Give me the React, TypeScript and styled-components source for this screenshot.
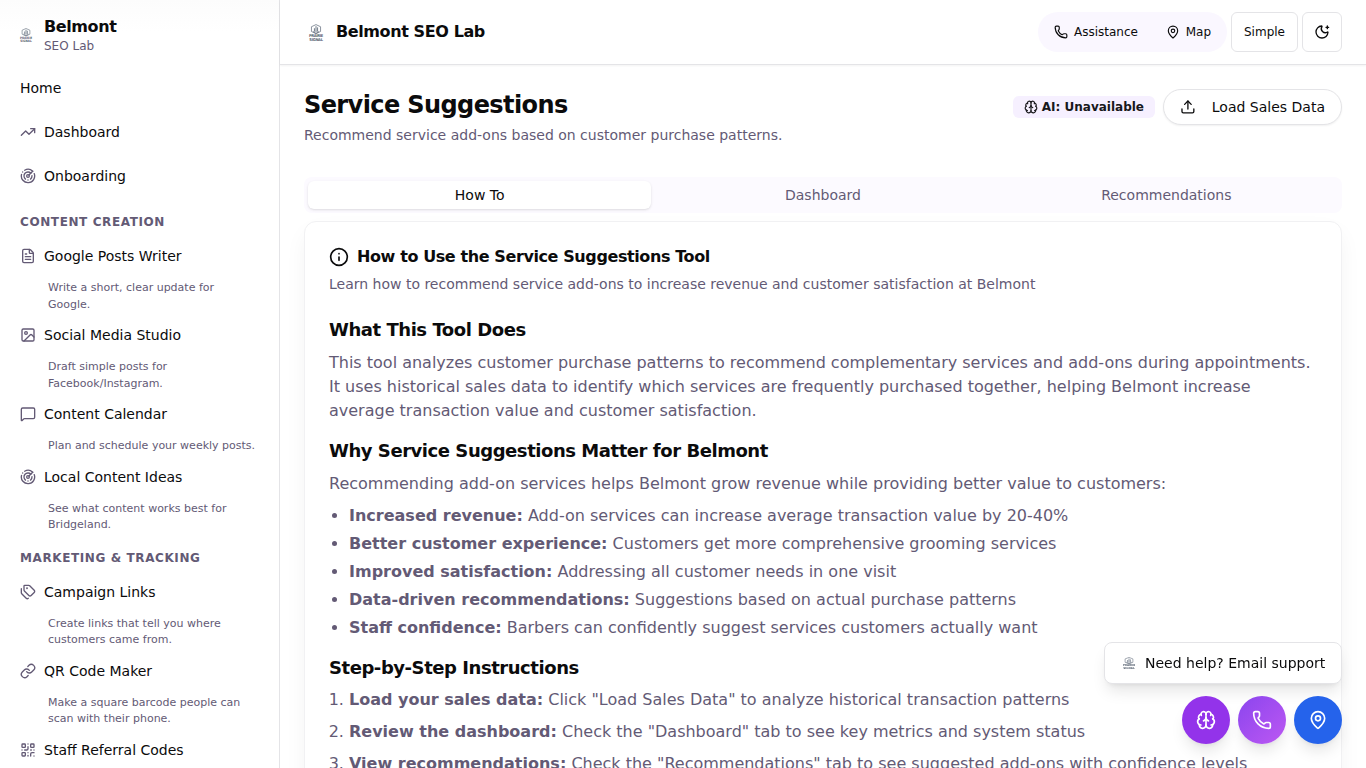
import React from "react";
import styled, { createGlobalStyle } from "styled-components";
import {
  TrendingUp, Radar, FileText, Image as ImageIcon, Tags, Link, QrCode,
  Phone, MapPin, Brain, Upload, Info,
} from "lucide-react";

const GlobalStyle = createGlobalStyle`
  *, *::before, *::after { box-sizing: border-box; }
  body { margin: 0; overflow: hidden; background: #fff; }
  h1, h2, h3, p, ul, ol { margin: 0; padding: 0; }
  button { font: inherit; color: inherit; cursor: pointer; }
`;

const ink = "#0b0b0c";
const muted = "#635a75";
const line = "#e4e4e7";

const Shell = styled.div`
  display: flex;
  height: 768px;
  overflow: hidden;
  font-family: "DejaVu Sans", sans-serif;
  font-size: 14px;
  line-height: 20px;
  color: ${ink};
`;

const Sidebar = styled.aside`
  flex: 0 0 280px;
  height: 768px;
  overflow: hidden;
  padding: 16px 20px;
  border-right: 1px solid ${line};
  background: linear-gradient(#fcfcfc, #fff 32px);
`;

const Brand = styled.div`
  display: flex;
  align-items: center;
  gap: 12px;
  height: 38px;
  margin-bottom: 14px;
`;

const BrandName = styled.div`
  padding-top: 1px;
  font-size: 16px;
  font-weight: 700;
  line-height: 20px;
  letter-spacing: -0.4px;
`;

const BrandSub = styled.div`
  font-size: 12px;
  line-height: 18px;
  color: ${muted};
`;

const NavItem = styled.a<{ $gap?: number }>`
  display: flex;
  align-items: center;
  gap: 8px;
  height: 40px;
  margin-bottom: ${(p) => p.$gap ?? 4}px;
  svg { color: ${muted}; flex: none; }
`;

const NavHint = styled.p`
  margin-bottom: 2px;
  padding-left: 28px;
  width: 237px;
  font-size: 11px;
  line-height: 16.5px;
  color: ${muted};
`;

const NavLabel = styled.h3<{ $top: number }>`
  margin: ${(p) => p.$top}px 0 6px;
  font-size: 12px;
  line-height: 16px;
  font-weight: 700;
  letter-spacing: 0.6px;
  text-transform: uppercase;
  color: ${muted};
`;

const Column = styled.div`
  flex: 1;
  min-width: 0;
  display: flex;
  flex-direction: column;
`;

const TopBar = styled.header`
  flex: none;
  display: flex;
  align-items: center;
  height: 65px;
  padding: 0 24px;
  border-bottom: 1px solid ${line};
  box-shadow: 0 1px 2px rgba(0, 0, 0, 0.05);
`;

const TopBrand = styled.div`
  display: flex;
  align-items: center;
  gap: 8px;
  flex: 1;
  font-size: 16px;
  font-weight: 700;
  letter-spacing: -0.4px;
  svg { margin: 0 5px; }
`;

const Pill = styled.div`
  display: flex;
  align-items: center;
  justify-content: space-between;
  width: 189px;
  height: 40px;
  padding: 0 16px;
  margin-right: 4px;
  border-radius: 20px;
  background: #faf7ff;
  font-size: 12px;
  line-height: 16px;
`;

const PillLink = styled.a`
  display: flex;
  align-items: center;
  gap: 6px;
`;

const SquareButton = styled.button<{ $width: number }>`
  display: flex;
  align-items: center;
  justify-content: center;
  width: ${(p) => p.$width}px;
  height: 40px;
  padding: 0;
  border: 1px solid ${line};
  border-radius: 6px;
  background: #fff;
  font-size: 12px;
  & + & { margin-left: 4px; }
`;

const Main = styled.main`
  flex: 1;
  min-height: 0;
  padding: 24px 24px 0;
`;

const PageHead = styled.div`
  display: flex;
  justify-content: space-between;
  height: 88px;
`;

const Title = styled.h1`
  font-size: 24px;
  line-height: 32px;
  font-weight: 700;
  letter-spacing: -0.6px;
`;

const Lead = styled.p`
  margin-top: 4px;
  color: ${muted};
`;

const Actions = styled.div`
  display: flex;
  align-items: center;
  gap: 8px;
  height: 36px;
`;

const Badge = styled.span`
  display: flex;
  align-items: center;
  gap: 4px;
  width: 142px;
  height: 22px;
  padding-left: 10.8px;
  border-radius: 6px;
  background: #f6f0ff;
  color: #18181b;
  font-size: 12px;
  font-weight: 700;
  white-space: nowrap;
`;

const LoadButton = styled.button`
  display: flex;
  align-items: center;
  gap: 16px;
  width: 179px;
  height: 36px;
  padding: 0 16px;
  border: 1px solid ${line};
  border-radius: 18px;
  background: #fff;
  box-shadow: 0 1px 2px rgba(0, 0, 0, 0.06);
  white-space: nowrap;
`;

const Tabs = styled.div`
  display: grid;
  grid-template-columns: repeat(3, 1fr);
  height: 36px;
  padding: 4px;
  border-radius: 8px;
  background: #fcfaff;
`;

const Tab = styled.button<{ $active?: boolean }>`
  border: 0;
  padding: 0;
  border-radius: 6px;
  background: ${(p) => (p.$active ? "#fff" : "transparent")};
  color: ${(p) => (p.$active ? ink : muted)};
  box-shadow: ${(p) => (p.$active ? "0 1px 3px rgba(0,0,0,0.1), 0 1px 2px -1px rgba(0,0,0,0.1)" : "none")};
`;

const Card = styled.section`
  height: 900px;
  margin-top: 8px;
  padding: 24px;
  border: 1px solid #f1f1f3;
  border-radius: 12px;
  background: #fff;
  box-shadow: 0 10px 24px -3px rgba(0, 0, 0, 0.06), 0 4px 6px -4px rgba(0, 0, 0, 0.04);
`;

const CardTitle = styled.h2`
  display: flex;
  align-items: center;
  gap: 8px;
  height: 22px;
  font-size: 16px;
  font-weight: 700;
  letter-spacing: -0.4px;
`;

const CardLead = styled.p`
  margin: 6px 0 22px;
  color: ${muted};
`;

const SectionTitle = styled.h3`
  margin: 14px 0 7px;
  font-size: 18px;
  line-height: 28px;
  font-weight: 700;
  letter-spacing: -0.45px;
`;

const Paragraph = styled.p`
  font-size: 16px;
  line-height: 24px;
  color: ${muted};
`;

const Bullets = styled.ul`
  display: flex;
  flex-direction: column;
  gap: 4px;
  margin-top: 8px;
  padding-left: 20px;
  font-size: 16px;
  line-height: 24px;
  color: ${muted};
`;

const Steps = styled(Bullets).attrs({ as: "ol" })`
  gap: 8px;
  margin-top: -1px;
`;

const Floating = styled.div`
  position: fixed;
  right: 24px;
  bottom: 24px;
  display: flex;
  flex-direction: column;
  align-items: flex-end;
  gap: 12px;
`;

const HelpCard = styled.a`
  display: flex;
  align-items: center;
  gap: 10px;
  width: 238px;
  height: 42px;
  padding: 0 18px;
  border: 1px solid ${line};
  border-radius: 8px;
  background: #fff;
  box-shadow: 0 10px 15px -3px rgba(0, 0, 0, 0.1), 0 4px 6px -4px rgba(0, 0, 0, 0.1);
  white-space: nowrap;
`;

const RoundRow = styled.div`
  display: flex;
  gap: 8px;
`;

const RoundButton = styled.button<{ $fill: string }>`
  display: grid;
  place-items: center;
  width: 48px;
  height: 48px;
  padding: 0;
  border: 0;
  border-radius: 50%;
  color: #fff;
  background: ${(p) => p.$fill};
  box-shadow: 0 10px 15px -3px rgba(0, 0, 0, 0.1), 0 4px 6px -4px rgba(0, 0, 0, 0.1);
`;

const LogoMark = styled.svg`
  flex: none;
  overflow: visible;
`;

const LogoText = styled.text`
  font: 700 4.6px "DejaVu Sans", sans-serif;
`;

function Logo({ width, height }: { width: number; height: number }) {
  return (
    <LogoMark width={width} height={height} viewBox="0 0 16 20" fill="none" stroke="#6b7684" preserveAspectRatio="none">
      <path d="M8 .7 13.2 3.2v5.6L8 11.5 2.8 8.8V3.2Z" strokeWidth=".9" />
      <path d="M8 2.5v7M6.2 5v4M9.8 4v5" strokeWidth="1.1" />
      <path d="M4.5 8.8 8 11l3.5-2.2" strokeWidth="1" />
      <g fill="#566170" stroke="none">
        <LogoText x="0" y="15.6" textLength="16" lengthAdjust="spacingAndGlyphs">PRAIRIE</LogoText>
        <LogoText x="0.4" y="19.6" textLength="15.2" lengthAdjust="spacingAndGlyphs">SIGNAL</LogoText>
      </g>
    </LogoMark>
  );
}

function ChatIcon() {
  return (
    <svg width="16" height="16" viewBox="0 0 24 24" fill="none" stroke="currentColor" strokeWidth="2" strokeLinecap="round" strokeLinejoin="round">
      <path d="M22 17a2 2 0 0 1-2 2H6.828a2 2 0 0 0-1.414.586l-2.202 2.202A.71.71 0 0 1 2 21.286V5a2 2 0 0 1 2-2h16a2 2 0 0 1 2 2z" />
    </svg>
  );
}

function MoonStar() {
  return (
    <svg width="16" height="16" viewBox="0 0 24 24" fill="none" stroke="currentColor" strokeWidth="2" strokeLinecap="round" strokeLinejoin="round">
      <path d="M20.985 12.486a9 9 0 1 1-9.473-9.472c.405-.022.617.46.402.803a6 6 0 0 0 8.268 8.268c.344-.215.825-.004.803.401" />
      <path d="M20 3v4M22 5h-4" />
    </svg>
  );
}

const content = [
  { icon: <FileText size={16} />, name: "Google Posts Writer", hint: "Write a short, clear update for Google." },
  { icon: <ImageIcon size={16} />, name: "Social Media Studio", hint: "Draft simple posts for Facebook/Instagram." },
  { icon: <ChatIcon />, name: "Content Calendar", hint: "Plan and schedule your weekly posts." },
  { icon: <Radar size={16} />, name: "Local Content Ideas", hint: "See what content works best for Bridgeland." },
];

const marketing = [
  { icon: <Tags size={16} />, name: "Campaign Links", hint: "Create links that tell you where customers came from." },
  { icon: <Link size={16} />, name: "QR Code Maker", hint: "Make a square barcode people can scan with their phone." },
  { icon: <QrCode size={16} />, name: "Staff Referral Codes", hint: "" },
];

const reasons = [
  ["Increased revenue:", "Add-on services can increase average transaction value by 20-40%"],
  ["Better customer experience:", "Customers get more comprehensive grooming services"],
  ["Improved satisfaction:", "Addressing all customer needs in one visit"],
  ["Data-driven recommendations:", "Suggestions based on actual purchase patterns"],
  ["Staff confidence:", "Barbers can confidently suggest services customers actually want"],
];

const steps = [
  ["Load your sales data:", 'Click "Load Sales Data" to analyze historical transaction patterns'],
  ["Review the dashboard:", 'Check the "Dashboard" tab to see key metrics and system status'],
  ["View recommendations:", 'Check the "Recommendations" tab to see suggested add-ons with confidence levels'],
];

function NavGroup({ label, top, items }: { label: string; top: number; items: typeof content }) {
  return (
    <>
      <NavLabel $top={top}>{label}</NavLabel>
      {items.map((item) => (
        <React.Fragment key={item.name}>
          <NavItem>{item.icon}{item.name}</NavItem>
          {item.hint && <NavHint>{item.hint}</NavHint>}
        </React.Fragment>
      ))}
    </>
  );
}

export default function App() {
  return (
    <>
      <GlobalStyle />
      <Shell>
        <Sidebar>
          <Brand>
            <Logo width={12} height={14} />
            <div>
              <BrandName>Belmont</BrandName>
              <BrandSub>SEO Lab</BrandSub>
            </div>
          </Brand>
          <NavItem>Home</NavItem>
          <NavItem><TrendingUp size={16} />Dashboard</NavItem>
          <NavItem $gap={1}><Radar size={16} />Onboarding</NavItem>
          <NavGroup label="Content Creation" top={18} items={content} />
          <NavGroup label="Marketing & Tracking" top={16} items={marketing} />
        </Sidebar>
        <Column>
          <TopBar>
            <TopBrand><Logo width={14} height={17} />Belmont SEO Lab</TopBrand>
            <Pill>
              <PillLink><Phone size={14} />Assistance</PillLink>
              <PillLink><MapPin size={14} />Map</PillLink>
            </Pill>
            <SquareButton $width={67}>Simple</SquareButton>
            <SquareButton $width={40} aria-label="Dark mode"><MoonStar /></SquareButton>
          </TopBar>
          <Main>
            <PageHead>
              <div>
                <Title>Service Suggestions</Title>
                <Lead>Recommend service add-ons based on customer purchase patterns.</Lead>
              </div>
              <Actions>
                <Badge><Brain size={14} />AI: Unavailable</Badge>
                <LoadButton><Upload size={16} />Load Sales Data</LoadButton>
              </Actions>
            </PageHead>
            <Tabs>
              <Tab $active>How To</Tab>
              <Tab>Dashboard</Tab>
              <Tab>Recommendations</Tab>
            </Tabs>
            <Card>
              <CardTitle><Info size={20} />How to Use the Service Suggestions Tool</CardTitle>
              <CardLead>Learn how to recommend service add-ons to increase revenue and customer satisfaction at Belmont</CardLead>
              <SectionTitle>What This Tool Does</SectionTitle>
              <Paragraph>
                This tool analyzes customer purchase patterns to recommend complementary services and add-ons during appointments. It uses historical sales data to identify which services are frequently purchased together, helping Belmont increase average transaction value and customer satisfaction.
              </Paragraph>
              <SectionTitle>Why Service Suggestions Matter for Belmont</SectionTitle>
              <Paragraph>Recommending add-on services helps Belmont grow revenue while providing better value to customers:</Paragraph>
              <Bullets>
                {reasons.map(([head, rest]) => <li key={head}><strong>{head}</strong> {rest}</li>)}
              </Bullets>
              <SectionTitle>Step-by-Step Instructions</SectionTitle>
              <Steps>
                {steps.map(([head, rest]) => <li key={head}><strong>{head}</strong> {rest}</li>)}
              </Steps>
            </Card>
          </Main>
        </Column>
        <Floating>
          <HelpCard><Logo width={12} height={12} />Need help? Email support</HelpCard>
          <RoundRow>
            <RoundButton $fill="#9333ea" aria-label="Assistant"><Brain size={20} /></RoundButton>
            <RoundButton $fill="linear-gradient(135deg, #8b45ee, #bc58f2)" aria-label="Call"><Phone size={20} /></RoundButton>
            <RoundButton $fill="#2563eb" aria-label="Map"><MapPin size={20} /></RoundButton>
          </RoundRow>
        </Floating>
      </Shell>
    </>
  );
}
